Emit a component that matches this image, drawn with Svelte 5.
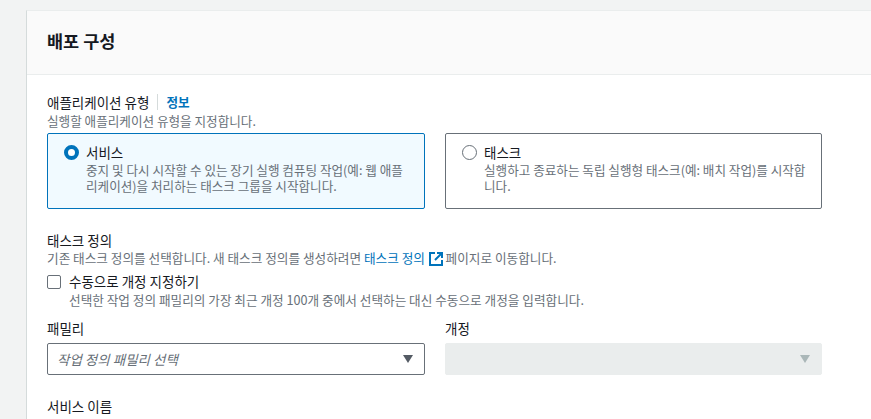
<script>
	const types = [
		{ title: '서비스', desc: '중지 및 다시 시작할 수 있는 장기 실행 컴퓨팅 작업(예: 웹 애플리케이션)을 처리하는 태스크 그룹을 시작합니다.', on: true },
		{ title: '태스크', desc: '실행하고 종료하는 독립 실행형 태스크(예: 배치 작업)를 시작합니다.', on: false }
	];
</script>

<div class="page">
	<section class="card">
		<header class="head"><h2>배포 구성</h2></header>
		<div class="content">
			<div class="label-row">
				<span class="label">애플리케이션 유형</span>
				<span class="info">정보</span>
			</div>
			<p class="hint first">실행할 애플리케이션 유형을 지정합니다.</p>
			<div class="tiles">
				{#each types as t}
					<div class="tile" class:on={t.on}>
						<span class="radio"></span>
						<div class="tile-text">
							<div class="tile-title">{t.title}</div>
							<div class="tile-desc">{t.desc}</div>
						</div>
					</div>
				{/each}
			</div>

			<div class="label task-label">태스크 정의</div>
			<p class="hint task-hint">
				기존 태스크 정의를 선택합니다. 새 태스크 정의를 생성하려면 <span class="link">태스크 정의</span>
				<svg class="ext" width="14" height="14" viewBox="0 0 14 14" aria-hidden="true">
					<path d="M6 1H1v12h12V8" fill="none" stroke="#0073bb" stroke-width="2" />
					<path d="M8 1h5v5M13 1L6 8" fill="none" stroke="#0073bb" stroke-width="2" />
				</svg>
				페이지로 이동합니다.
			</p>
			<div class="check-row">
				<span class="check"></span>
				<div>
					<div class="check-title">수동으로 개정 지정하기</div>
					<div class="check-desc">선택한 작업 정의 패밀리의 가장 최근 개정 100개 중에서 선택하는 대신 수동으로 개정을 입력합니다.</div>
				</div>
			</div>
			<div class="selects">
				<div>
					<div class="label">패밀리</div>
					<div class="select">
						<span class="placeholder">작업 정의 패밀리 선택</span>
						<span class="caret"></span>
					</div>
				</div>
				<div>
					<div class="label">개정</div>
					<div class="select disabled"><span class="caret"></span></div>
				</div>
			</div>
			<div class="label name-label">서비스 이름</div>
		</div>
	</section>
</div>

<style>
	:global(body) {
		margin: 0;
		background: #f2f3f3;
		overflow: hidden;
	}

	.page {
		height: 419px;
		overflow: hidden;
		padding: 10px 0 0 26px;
		box-sizing: border-box;
		font-family: 'Noto Sans CJK KR', 'Noto Sans', sans-serif;
		color: #16191f;
		font-size: 12.6px;
	}

	.card {
		background: #fff;
		border-left: 1px solid #d5dbdb;
		border-top: 1px solid #eaeded;
		min-height: 420px;
	}

	.head {
		height: 64px;
		box-sizing: border-box;
		background: #fafafa;
		border-bottom: 1px solid #eaeded;
		padding: 17px 0 0 20px;
	}

	h2 {
		margin: 0;
		font-size: 17.5px;
		line-height: 26px;
		font-weight: 700;
	}

	.content {
		padding: 17px 49px 0 20px;
	}

	.label-row {
		display: flex;
		align-items: center;
		height: 20px;
	}

	.label {
		font-size: 13.5px;
		line-height: 20px;
	}

	.info {
		margin-left: 8px;
		padding-left: 8px;
		border-left: 1px solid #d5dbdb;
		color: #0073bb;
		font-weight: 700;
		font-size: 12.6px;
		line-height: 16px;
	}

	.hint {
		margin: 0;
		font-size: 12.6px;
		line-height: 17px;
		color: #687078;
		white-space: nowrap;
	}

	.task-hint {
		font-size: 12.65px;
		line-height: 16px;
	}

	.tiles {
		display: grid;
		grid-template-columns: 378px 377px;
		gap: 20px;
		margin-top: 4px;
	}

	.tile {
		display: flex;
		gap: 7px;
		height: 76px;
		box-sizing: border-box;
		border: 1px solid #687078;
		border-radius: 2px;
		padding: 9px 14px 9px 16px;
	}

	.tile.on {
		border-color: #0073bb;
		background: #f1faff;
	}

	.radio {
		flex: none;
		width: 15px;
		height: 15px;
		box-sizing: border-box;
		border: 1px solid #687078;
		border-radius: 50%;
		margin-top: 2px;
	}

	.on .radio {
		border: 4.5px solid #0073bb;
		background: #fff;
	}

	.tile-title {
		font-size: 13.5px;
		line-height: 19px;
	}

	.tile-desc {
		font-size: 12.6px;
		line-height: 16px;
		color: #687078;
	}

	.task-label {
		margin-top: 21px;
	}

	.ext {
		vertical-align: -3px;
		margin-left: 1px;
	}

	.link {
		color: #0073bb;
	}

	.check-row {
		display: flex;
		gap: 8px;
		margin-top: 6px;
	}

	.check {
		flex: none;
		width: 14px;
		height: 14px;
		box-sizing: border-box;
		border: 1px solid #687078;
		border-radius: 2px;
		margin-top: 3px;
	}

	.check-title {
		font-size: 13.5px;
		line-height: 19px;
	}

	.check-desc {
		font-size: 12.65px;
		line-height: 17px;
		color: #687078;
		white-space: nowrap;
	}

	.selects {
		display: grid;
		grid-template-columns: 378px 377px;
		gap: 20px;
		margin-top: 10px;
	}

	.select {
		display: flex;
		align-items: center;
		justify-content: space-between;
		height: 32px;
		box-sizing: border-box;
		margin-top: 5px;
		border: 1px solid #687078;
		border-radius: 2px;
		padding: 0 11px 0 9px;
	}

	.select.disabled {
		justify-content: flex-end;
		background: #eaeded;
		border-color: #eaeded;
	}

	.placeholder {
		font-style: italic;
		color: #687078;
		font-size: 13.5px;
	}

	.caret {
		width: 0;
		height: 0;
		border-left: 5.5px solid transparent;
		border-right: 5.5px solid transparent;
		border-top: 8px solid #545b64;
	}

	.disabled .caret {
		border-top-color: #aab7b8;
	}

	.name-label {
		margin-top: 21px;
	}
</style>
